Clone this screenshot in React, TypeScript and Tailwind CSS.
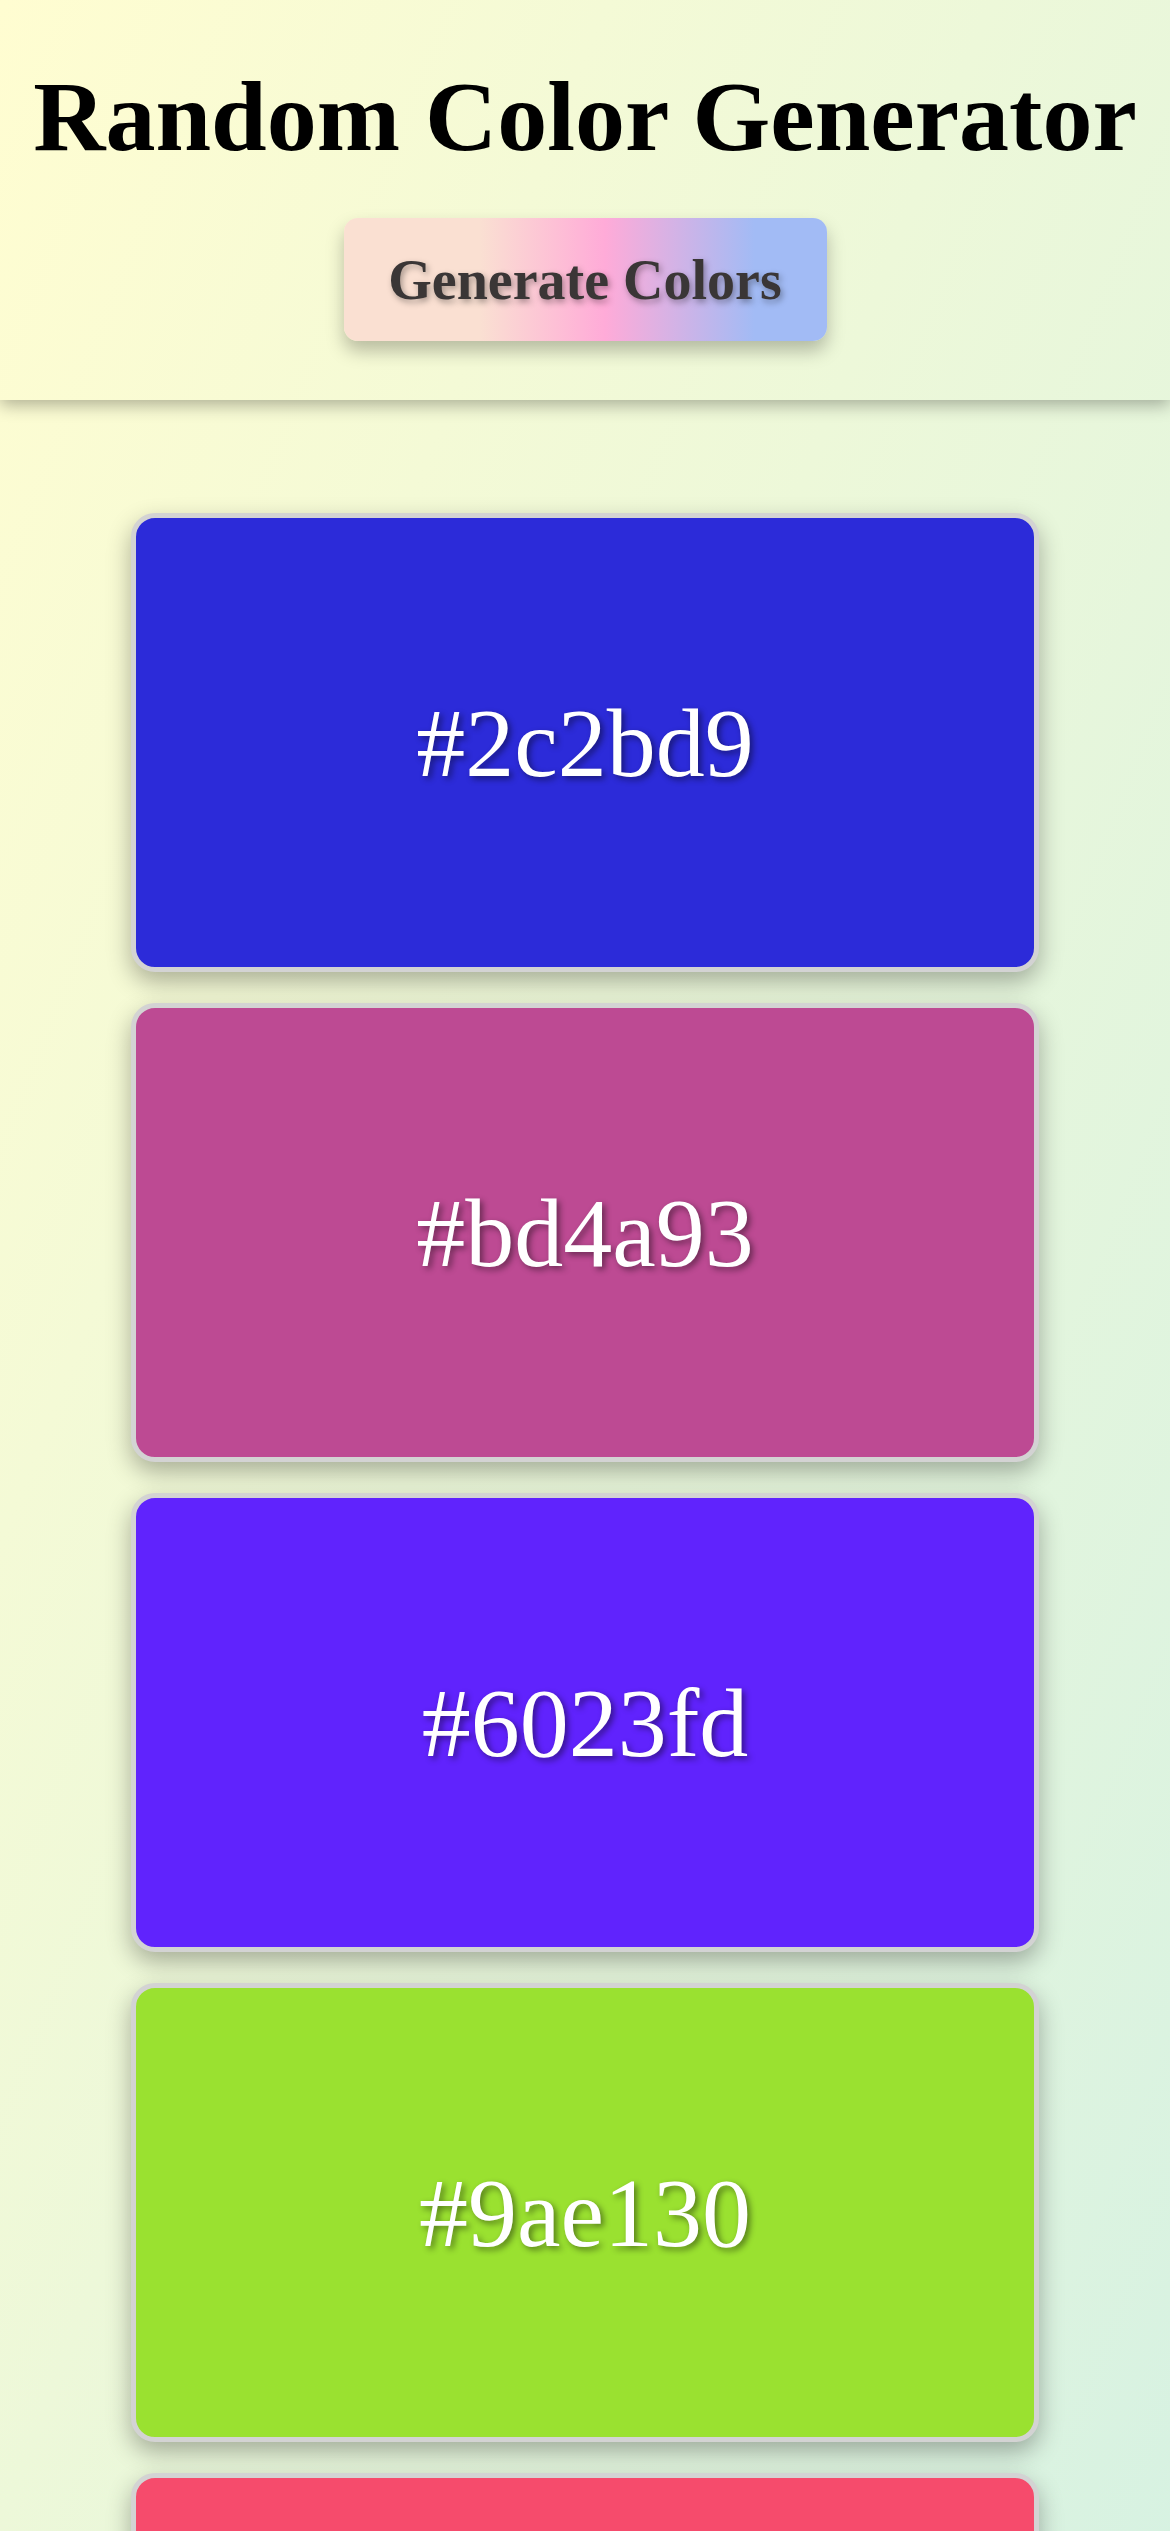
import React from 'react';

const colors = ['#2c2bd9', '#bd4a93', '#6023fd', '#9ae130', '#f64b6c'];

const ColorCard: React.FC<{ hex: string }> = ({ hex }) => (
  <div
    className="flex h-[459px] w-[908px] items-center justify-center rounded-[24px] border-[5px] border-[#d3d3d3] shadow-[0_10px_24px_rgba(0,0,0,0.3)]"
    style={{ backgroundColor: hex }}
  >
    <span className="text-[98px] leading-none text-white [text-shadow:3px_3px_6px_rgba(0,0,0,0.45)]">
      {hex}
    </span>
  </div>
);

export default function App() {
  return (
    <div className="min-h-[2531px] overflow-hidden bg-gradient-to-br from-[#fffdd1] to-[#d4f1e3] font-['Liberation_Serif',serif]">
      <header className="flex h-[400px] flex-col items-center pt-[60px] shadow-[0_5px_16px_rgba(0,0,0,0.3)]">
        <h1 className="text-[100px] font-bold leading-[113px] text-black">Random Color Generator</h1>
        <button className="mt-[45px] flex h-[123px] w-[483px] items-center justify-center rounded-[14px] bg-[linear-gradient(90deg,#fae0d2_28%,#ffabd8_54%,#a2bbf5_85%)] shadow-[0_10px_18px_rgba(0,0,0,0.25)]">
          <span className="text-[56px] font-bold text-[#3a3636] [text-shadow:2px_3px_6px_rgba(0,0,0,0.35)]">
            Generate Colors
          </span>
        </button>
      </header>
      <main className="flex flex-col items-center gap-[31px] pt-[113px] pb-10">
        {colors.map((c) => (
          <ColorCard key={c} hex={c} />
        ))}
      </main>
    </div>
  );
}
